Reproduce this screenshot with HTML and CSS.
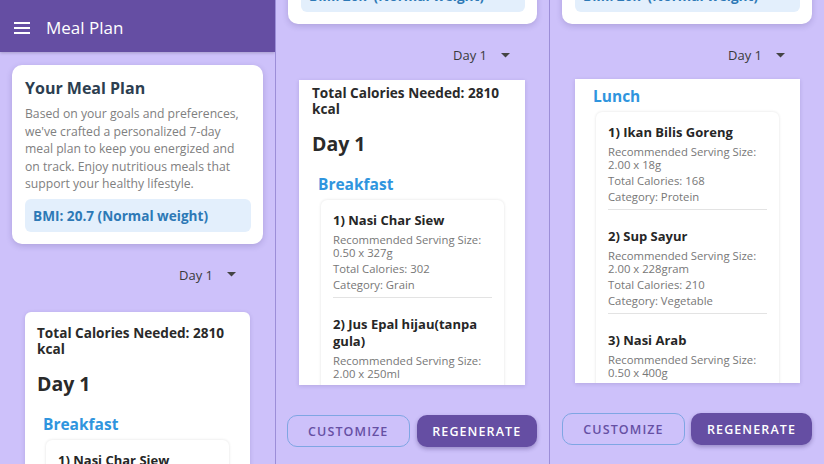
FILE: index.html
```html
<!DOCTYPE html>
<html lang="en">
<head>
<meta charset="utf-8">
<title>Meal Plan</title>
<link rel="stylesheet" href="styles.css">
</head>
<body>
<div class="screens">

  <section class="screen">
    <header class="appbar">
      <svg class="menu-icon" width="16" height="12" viewBox="0 0 16 12"><rect x="0" y="0" width="16" height="2" fill="#fff"/><rect x="0" y="5" width="16" height="2" fill="#fff"/><rect x="0" y="10" width="16" height="2" fill="#fff"/></svg>
      <h1 class="appbar-title">Meal Plan</h1>
    </header>
    <div class="intro-card">
      <h2 class="intro-title">Your Meal Plan</h2>
      <p class="intro-text">Based on your goals and preferences, we've crafted a personalized 7-day meal plan to keep you energized and on track. Enjoy nutritious meals that support your healthy lifestyle.</p>
      <div class="bmi">BMI: 20.7 (Normal weight)</div>
    </div>
    <div class="day-select">
      <span>Day 1</span>
      <svg class="caret" width="9" height="5" viewBox="0 0 9 5"><path d="M0 0h9L4.5 4.5z" fill="#444"/></svg>
    </div>
    <div class="plan-card">
      <h2 class="total">Total Calories Needed: 2810 kcal</h2>
      <h3 class="day-title">Day 1</h3>
      <h4 class="meal-title">Breakfast</h4>
      <div class="items">
        <div class="item">
          <h5 class="item-name">1) Nasi Char Siew</h5>
          <p class="item-line">Recommended Serving Size: 0.50 x 327g</p>
        </div>
      </div>
    </div>
  </section>

  <section class="screen">
    <div class="intro-tail">
      <div class="bmi">BMI: 20.7 (Normal weight)</div>
    </div>
    <div class="day-select">
      <span>Day 1</span>
      <svg class="caret" width="9" height="5" viewBox="0 0 9 5"><path d="M0 0h9L4.5 4.5z" fill="#444"/></svg>
    </div>
    <div class="scroll-box">
      <div class="scroll-content first">
        <h2 class="total">Total Calories Needed: 2810 kcal</h2>
        <h3 class="day-title">Day 1</h3>
        <h4 class="meal-title">Breakfast</h4>
        <div class="items">
          <div class="item">
            <h5 class="item-name">1) Nasi Char Siew</h5>
            <p class="item-line">Recommended Serving Size: 0.50 x 327g</p>
            <p class="item-line">Total Calories: 302</p>
            <p class="item-line">Category: Grain</p>
          </div>
          <div class="item">
            <h5 class="item-name">2) Jus Epal hijau(tanpa gula)</h5>
            <p class="item-line">Recommended Serving Size: 2.00 x 250ml</p>
            <p class="item-line">Total Calories: 118</p>
            <p class="item-line">Category: Beverage</p>
          </div>
        </div>
      </div>
    </div>
    <div class="actions">
      <button class="btn btn-outline">CUSTOMIZE</button>
      <button class="btn btn-filled">REGENERATE</button>
    </div>
  </section>

  <section class="screen third">
    <div class="intro-tail">
      <div class="bmi">BMI: 20.7 (Normal weight)</div>
    </div>
    <div class="day-select">
      <span>Day 1</span>
      <svg class="caret" width="9" height="5" viewBox="0 0 9 5"><path d="M0 0h9L4.5 4.5z" fill="#444"/></svg>
    </div>
    <div class="scroll-box">
      <div class="scroll-content lunch">
        <h4 class="meal-title">Lunch</h4>
        <div class="items">
          <div class="item">
            <h5 class="item-name">1) Ikan Bilis Goreng</h5>
            <p class="item-line">Recommended Serving Size: 2.00 x 18g</p>
            <p class="item-line">Total Calories: 168</p>
            <p class="item-line">Category: Protein</p>
          </div>
          <div class="item">
            <h5 class="item-name">2) Sup Sayur</h5>
            <p class="item-line">Recommended Serving Size: 2.00 x 228gram</p>
            <p class="item-line">Total Calories: 210</p>
            <p class="item-line">Category: Vegetable</p>
          </div>
          <div class="item">
            <h5 class="item-name">3) Nasi Arab</h5>
            <p class="item-line">Recommended Serving Size: 0.50 x 400g</p>
            <p class="item-line">Total Calories: 260</p>
            <p class="item-line">Category: Grain</p>
          </div>
        </div>
      </div>
    </div>
    <div class="actions">
      <button class="btn btn-outline">CUSTOMIZE</button>
      <button class="btn btn-filled">REGENERATE</button>
    </div>
  </section>

</div>
</body>
</html>
```

FILE: styles.css
```css
* { box-sizing: border-box; }
html, body { margin: 0; padding: 0; }
body {
  width: 824px;
  height: 464px;
  overflow: hidden;
  background: #cdc1fa;
  font-family: "Open Sans", "Noto Sans", sans-serif;
}
h1, h2, h3, h4, h5, p { margin: 0; }

.screens {
  display: flex;
  height: 464px;
}
.screen {
  height: 464px;
  overflow: hidden;
  background: #cdc1fa;
  border-right: 1px solid #9c8ed8;
  flex: 0 0 auto;
}
.screen:nth-child(1) { width: 276px; }
.screen:nth-child(2) { width: 274px; }
.screen:nth-child(3) { width: 274px; border-right: none; }

/* App bar */
.appbar {
  height: 52px;
  background: #654ea3;
  display: flex;
  align-items: center;
  padding: 3px 0 0 14px;
  box-shadow: 0 1px 3px rgba(0,0,0,0.2);
}
.appbar-title {
  margin-left: 16px;
  color: #fff;
  font-size: 17px;
  font-weight: 400;
}

/* Intro card */
.intro-card {
  margin: 13px 12px 0;
  background: #fff;
  border-radius: 10px;
  padding: 12px 12px 12px 13px;
  box-shadow: 0 2px 6px rgba(40,20,90,0.18);
}
.intro-title {
  font-size: 16px;
  line-height: 22px;
  font-weight: 700;
  color: #2c3e50;
}
.intro-text {
  margin-top: 6px;
  font-size: 12.2px;
  line-height: 17.5px;
  color: #808080;
}
.bmi {
  margin-top: 6px;
  height: 33px;
  background: #e3effc;
  border-radius: 6px;
  padding-left: 8px;
  display: flex;
  align-items: center;
  font-size: 13.6px;
  font-weight: 700;
  color: #2d79b6;
}
.intro-tail {
  margin: -21px 12px 0;
  background: #fff;
  border-radius: 0 0 10px 10px;
  padding: 0 12px 12px 13px;
  box-shadow: 0 2px 6px rgba(40,20,90,0.18);
}
.intro-tail .bmi { margin-top: 0; }

/* Day select */
.day-select {
  margin-top: 22px;
  height: 18px;
  display: flex;
  align-items: center;
  justify-content: flex-end;
  padding-right: 39px;
  gap: 14px;
  font-size: 13px;
  color: #3a3a3a;
}

/* Plan card */
.plan-card {
  margin: 28px 25px 0;
  background: #fff;
  border-radius: 6px;
  padding: 13px 12px 40px;
  box-shadow: 0 1px 4px rgba(40,20,90,0.15);
}
.total {
  font-size: 13.6px;
  line-height: 16px;
  font-weight: 700;
  color: #2a2a2a;
}
.day-title {
  margin-top: 15px;
  font-size: 19.5px;
  line-height: 24px;
  font-weight: 700;
  color: #2a2a2a;
}
.meal-title {
  margin-top: 18px;
  padding-left: 6px;
  font-size: 15.5px;
  line-height: 20px;
  font-weight: 700;
  color: #2f95de;
}
.items {
  margin: 6px 9px 0;
  background: #fff;
  border-radius: 6px;
  padding-top: 12px;
  box-shadow: 0 0 3px rgba(0,0,0,0.12);
}
.item {
  margin: 0 12px;
  padding: 0 0 6px;
  border-bottom: 1px solid #e3e3e3;
}
.item + .item { padding-top: 18px; }
.item-name {
  font-size: 13px;
  line-height: 17px;
  font-weight: 700;
  color: #262626;
  margin-bottom: 4px;
}
.item-line {
  font-size: 11.3px;
  line-height: 13px;
  color: #777;
}
.item-line + .item-line { margin-top: 3px; }

/* Scroll box (panels 2 and 3) */
.scroll-box {
  margin: 16px 24px 0 23px;
  height: 305px;
  background: #fff;
  overflow: hidden;
  box-shadow: 0 1px 4px rgba(40,20,90,0.15);
}
.third .scroll-box { margin: 15px 24px 0 25px; height: 304px; }
.scroll-content { padding: 5px 12px 0 13px; }
.scroll-content.lunch { padding: 7px 12px 0; }
.scroll-content.lunch .meal-title { margin-top: 0; }

/* Buttons */
.actions {
  margin: 30px 12px 0 11px;
  display: flex;
  gap: 7px;
}
.third .actions { margin: 30px 12px 0 12px; gap: 6px; }
.btn {
  flex: 1;
  height: 32px;
  border-radius: 10px;
  font-family: "Open Sans", "Noto Sans", sans-serif;
  font-size: 12.5px;
  font-weight: 600;
  letter-spacing: 1.1px;
}
.btn-outline {
  background: transparent;
  border: 1.5px solid #7fa6e3;
  color: #6650a4;
}
.btn-filled {
  background: #654ea3;
  border: none;
  color: #fff;
  box-shadow: 0 2px 4px rgba(30,10,80,0.3);
}
```
